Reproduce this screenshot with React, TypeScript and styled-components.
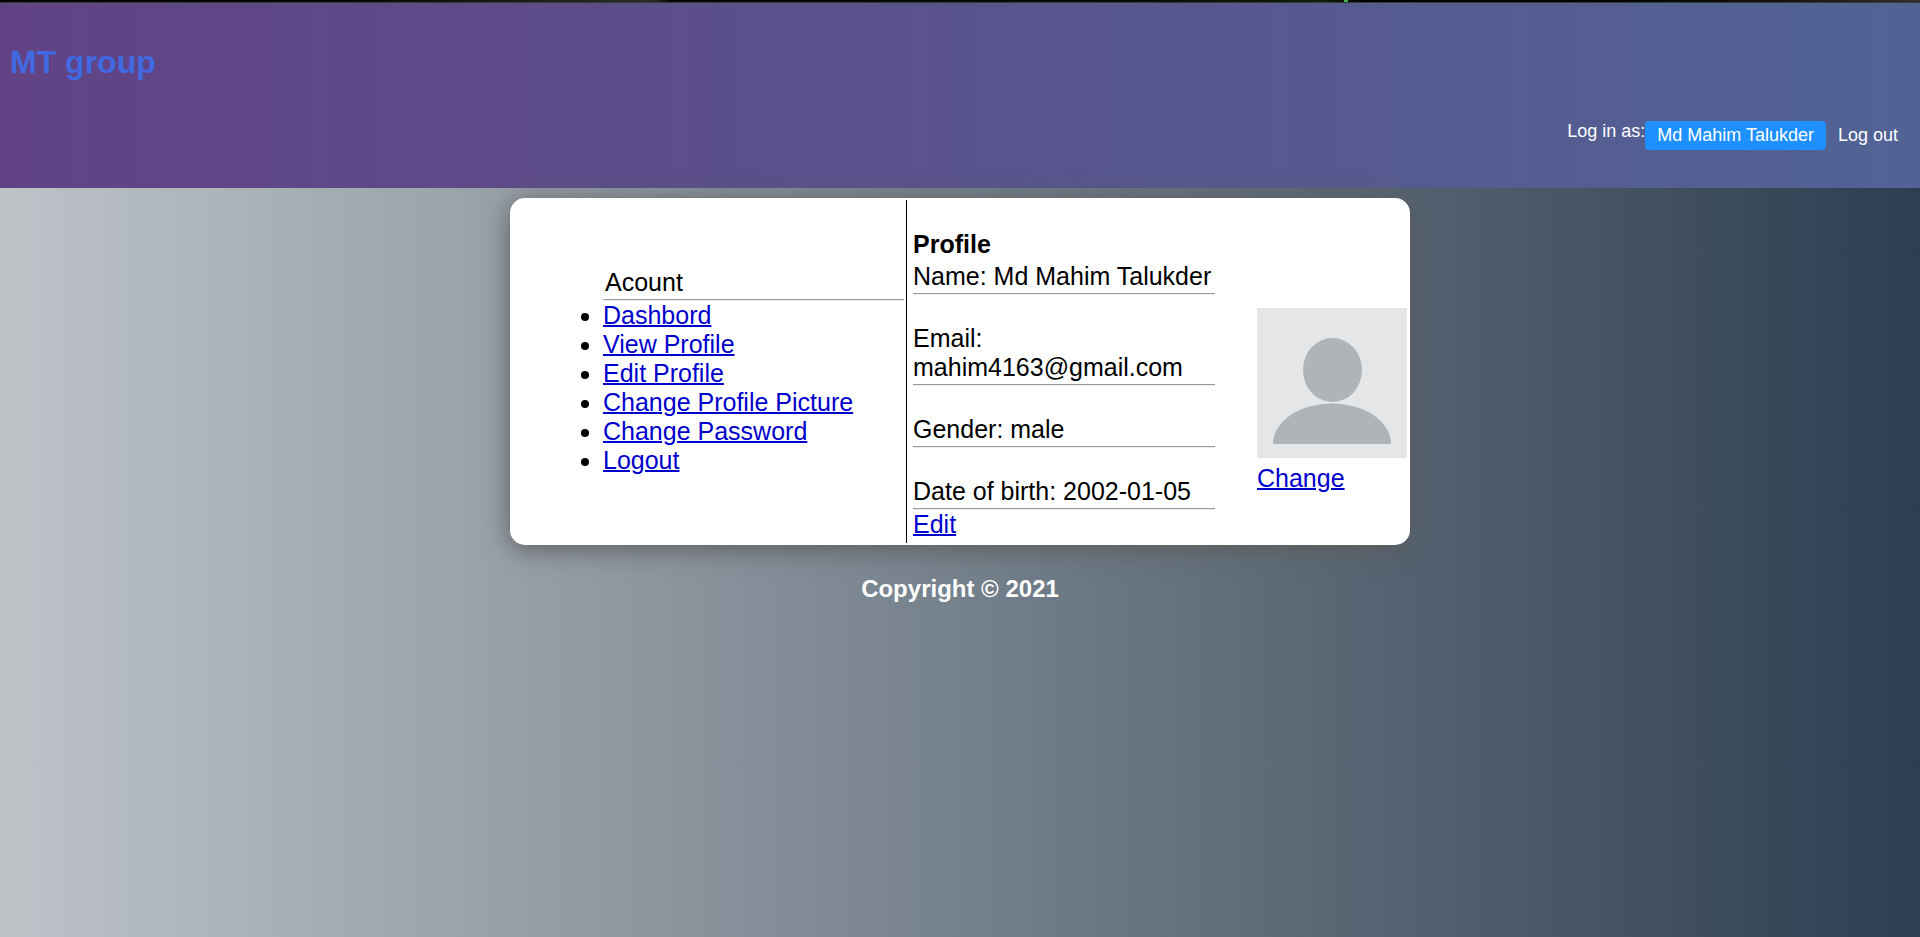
import React from "react";
import styled, { createGlobalStyle } from "styled-components";

const GlobalStyle = createGlobalStyle`
  *, *::before, *::after { box-sizing: border-box; }
  body {
    margin: 0;
    min-height: 100vh;
    background: linear-gradient(to right, #bdc3c7, #2c3e50);
    color: #000;
    font: 25px/29px Arial, "Liberation Sans", sans-serif;
  }
`;

const TopStrip = styled.div`
  position: relative;
  height: 3px;
  border-bottom: 1px solid #33402c;
  background: linear-gradient(to right, #000 0%, #050505 18%, #2c2c2c 34%, #050505 35%, #0a0a0a 60%, #151a15 69%, #000 71%, #050505 86%, #141414 93%, #303030 100%);
`;

const StripMark = styled.span`
  position: absolute;
  left: 70%;
  top: 0;
  width: 4px;
  height: 2px;
  background: #4caf50;
`;

const Header = styled.header`
  display: flex;
  flex-direction: column;
  gap: 40px;
  padding: 41px 10px 38px;
  background: linear-gradient(to right, #614385, #516395);
`;

const Brand = styled.h1`
  margin: 0;
  color: royalblue;
  font-size: 32px;
  line-height: 37px;
`;

const UserNav = styled.nav`
  display: flex;
  justify-content: flex-end;
  color: #fff;
  font-size: 18px;
  line-height: 21px;
`;

const NavLink = styled.a<{ $active?: boolean }>`
  padding: 4px 12px;
  border-radius: 4px;
  background: ${(p) => (p.$active ? "dodgerblue" : "transparent")};
  color: #fff;
  text-decoration: none;
`;

const Card = styled.main`
  display: flex;
  width: 900px;
  max-width: 100%;
  margin: 10px auto 0;
  padding: 2px;
  border-radius: 15px;
  background: #fff;
  box-shadow: 0 4px 26px #5c5c5c;
`;

const Account = styled.section`
  display: flex;
  flex: 1;
  flex-direction: column;
  justify-content: center;
  padding: 0 2px 0 91px;
  border-right: 1px solid #000;
`;

const AccountTitle = styled.div`
  padding: 0 2px;
`;

const Rule = styled.hr`
  width: 100%;
  margin: 2px 0 0;
  border: 0;
  border-top: 1px solid #9a9a9a;
  border-bottom: 1px solid #eee;
`;

const Menu = styled.ul`
  margin: 0;
  padding: 0;
`;

const Link = styled.a`
  color: #0000cd;
  text-decoration: underline;
  text-decoration-thickness: 2px;
`;

const Profile = styled.section`
  width: 308px;
  padding: 30px 0 4px 6px;
`;

const ProfileTitle = styled.h2`
  margin: 0 0 3px;
  font-size: 25px;
  line-height: 29px;
`;

const Field = styled.div`
  & + & {
    margin-top: 29px;
  }
`;

const Picture = styled.section`
  display: flex;
  flex-direction: column;
  align-items: flex-start;
  gap: 6px;
  margin-left: 42px;
  padding: 108px 1px 0 0;
`;

const Avatar = styled.svg`
  display: block;
  width: 150px;
  height: 150px;
`;

const Footer = styled.footer`
  padding: 30px 10px;
  color: #fff;
  font-size: 24px;
  font-weight: bold;
  line-height: 28px;
  text-align: center;
`;

const menu = [
  "Dashbord",
  "View Profile",
  "Edit Profile",
  "Change Profile Picture",
  "Change Password",
  "Logout",
];

const fields = [
  "Name: Md Mahim Talukder",
  "Email: mahim4163@gmail.com",
  "Gender: male",
  "Date of birth: 2002-01-05",
];

export default function App() {
  return (
    <>
      <GlobalStyle />
      <TopStrip>
        <StripMark />
      </TopStrip>
      <Header>
        <Brand>MT group</Brand>
        <UserNav>
          <span>Log in as:</span>
          <NavLink href="#profile" $active>
            Md Mahim Talukder
          </NavLink>
          <NavLink href="#logout">Log out</NavLink>
        </UserNav>
      </Header>
      <Card>
        <Account>
          <AccountTitle>Acount</AccountTitle>
          <Rule />
          <Menu>
            {menu.map((item) => (
              <li key={item}>
                <Link href="#menu">{item}</Link>
              </li>
            ))}
          </Menu>
        </Account>
        <Profile>
          <ProfileTitle>Profile</ProfileTitle>
          {fields.map((field) => (
            <Field key={field}>
              {field}
              <Rule />
            </Field>
          ))}
          <Link href="#edit">Edit</Link>
        </Profile>
        <Picture>
          <Avatar viewBox="0 0 150 150" role="img" aria-label="Profile picture">
            <rect width="150" height="150" fill="#e4e6e8" />
            <ellipse cx="75.5" cy="62" rx="29.5" ry="32" fill="#aeb4b8" />
            <path d="M16 136a59 40.5 0 0 1 118 0z" fill="#aeb4b8" />
          </Avatar>
          <Link href="#change">Change</Link>
        </Picture>
      </Card>
      <Footer>Copyright © 2021</Footer>
    </>
  );
}
